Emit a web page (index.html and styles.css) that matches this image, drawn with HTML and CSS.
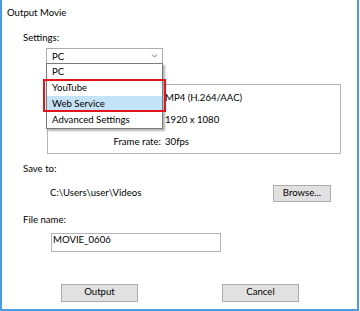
FILE: index.html
```html
<!DOCTYPE html>
<html lang="en">
<head>
    <meta charset="UTF-8">
    <meta name="viewport" content="width=device-width, initial-scale=1.0">
    <title>Output Movie</title>
    <link rel="stylesheet" href="styles.css">
</head>
<body>
    <div class="window">
        <div class="title">Output Movie</div>
        <div class="body">
            <div class="label">Settings:</div>
            <div class="combo-wrap">
                <div class="combo">
                    <span>PC</span>
                    <svg class="chevron" width="7" height="4" viewBox="0 0 7 4"><path d="M1 0.5 L3.5 3 L6 0.5" fill="none" stroke="#707070" stroke-width="1"/></svg>
                </div>
                <ul class="dropdown">
                    <li>PC</li>
                    <li>YouTube</li>
                    <li class="selected">Web Service</li>
                    <li>Advanced Settings</li>
                </ul>
                <div class="callout"></div>
            </div>
            <div class="group">
                <div class="row"><span class="key">Format:</span><span>MP4 (H.264/AAC)</span></div>
                <div class="row"><span class="key">Size:</span><span>1920 x 1080</span></div>
                <div class="row"><span class="key">Frame rate:</span><span>30fps</span></div>
            </div>
            <div class="label save">Save to:</div>
            <div class="path-row">
                <span class="path">C:\Users\user\Videos</span>
                <button class="btn browse" type="button">Browse...</button>
            </div>
            <div class="label file">File name:</div>
            <div class="textbox">MOVIE_0606</div>
            <div class="actions">
                <button class="btn" type="button">Output</button>
                <button class="btn" type="button">Cancel</button>
            </div>
        </div>
    </div>
</body>
</html>
```

FILE: styles.css
```css
*{margin:0;padding:0;}
body{
    background:#fff;
    color:#000;
    font-family:Lato,"Open Sans",sans-serif;
    font-size:9.6px;
    line-height:12px;
}
.window{
    width:359px;
    height:311px;
    box-sizing:border-box;
    border:2px solid #4b9ce0;
    border-top:none;
    padding:7px 0 0 5px;
}
.body{margin-left:16px;}
.label{margin-top:13px;}
.label.save{margin-top:9px;}
.label.file{margin-top:12px;}

/* combo box with its open list */
.combo-wrap{
    position:relative;
    width:117px;
    margin:4px 0 0 23px;
}
.combo{
    display:flex;
    justify-content:space-between;
    height:16px;
    box-sizing:border-box;
    border:1px solid #adadad;
    padding:2px 0 0 5px;
}
.chevron{margin:3px 4px 0 0;}
.dropdown{
    position:absolute;
    left:0;
    top:15px;
    width:117px;
    box-sizing:border-box;
    list-style:none;
    background:#fff;
    border:1px solid #7a7a7a;
    box-shadow:2px 2px 2px rgba(0,0,0,0.3);
    z-index:2;
}
.dropdown li{height:16px;line-height:16px;padding-left:5px;}
.dropdown li.selected{background:#c5e3f6;}
.callout{
    position:absolute;
    left:-3px;
    top:31px;
    width:123px;
    height:33px;
    box-sizing:border-box;
    border:2px solid #e3141b;
    z-index:3;
}

.group{
    width:294px;
    box-sizing:border-box;
    margin:20px 0 0 24px;
    border:1px solid #b4b4b4;
    padding:7px 0 5px;
}
.row{display:flex;}
.row+.row{margin-top:10px;}
.key{width:113px;text-align:right;margin-right:4px;}

.path-row{
    display:flex;
    align-items:baseline;
    width:308px;
    margin-top:10px;
}
.path{margin-left:27px;}
.btn{
    font:inherit;
    line-height:12px;
    color:#000;
    background:#e1e1e1;
    border:1px solid #adadad;
    border-radius:0;
    box-sizing:border-box;
}
.browse{margin-left:auto;width:58px;height:17px;padding:1px 0 2px;}
.textbox{
    width:170px;
    height:19px;
    box-sizing:border-box;
    margin:7px 0 0 28px;
    border:1px solid #b4b4b4;
    padding-left:1px;
}
.actions{display:flex;gap:84px;margin:32px 0 0 38px;}
.actions .btn{width:77px;height:18px;padding:1px 0 3px;}
```
